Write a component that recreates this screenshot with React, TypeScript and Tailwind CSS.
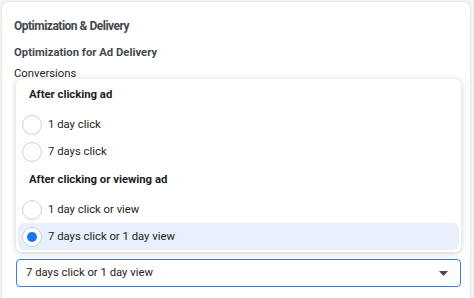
import React from "react";

type Option = { label: string; selected?: boolean };

const groups: { title: string; options: Option[] }[] = [
  {
    title: "After clicking ad",
    options: [{ label: "1 day click" }, { label: "7 days click" }],
  },
  {
    title: "After clicking or viewing ad",
    options: [
      { label: "1 day click or view" },
      { label: "7 days click or 1 day view", selected: true },
    ],
  },
];

function Radio({ checked }: { checked?: boolean }) {
  return (
    <span className="flex h-5 w-5 shrink-0 items-center justify-center rounded-full border border-[#ccd0d5] bg-white">
      {checked && <span className="h-[10px] w-[10px] rounded-full bg-[#1877f2]" />}
    </span>
  );
}

function OptionRow({ option }: { option: Option }) {
  return (
    <div
      className={
        option.selected
          ? "flex h-[27px] items-center gap-[6px] rounded-md bg-[#e9f0fb] px-1 pt-[1px]"
          : "flex h-[27px] items-center gap-[6px] rounded-md px-1 pt-[1px]"
      }
    >
      <Radio checked={option.selected} />
      <span className="text-[11.3px] text-[#1c1e21]">{option.label}</span>
    </div>
  );
}

export default function App() {
  return (
    <div
      className="h-[298px] overflow-hidden bg-[#f4f4f5] pl-[2px] pt-[2px]"
      style={{ fontFamily: "Roboto, 'Liberation Sans', sans-serif" }}
    >
      <div className="h-[310px] w-[468px] rounded-md bg-white pl-[12px] pt-[14px] shadow-[0_0_2px_rgba(0,0,0,0.18)]">
        <h1 className="text-[12px] leading-5 font-bold tracking-[-0.5px] text-[#444950]">
          Optimization &amp; Delivery
        </h1>
        <div className="mt-[9px] text-[11.3px] leading-4 font-bold text-[#444950]">
          Optimization for Ad Delivery
        </div>
        <div className="mt-[5px] text-[11.3px] leading-4 text-[#1c1e21]">Conversions</div>

        <div className="relative z-10 -mt-[3px] ml-[2px] w-[445px] rounded-md bg-white px-[2px] pt-2 pb-[2px] shadow-[0_1px_6px_rgba(0,0,0,0.2)]">
          {groups.map((g, i) => (
            <div key={g.title} className={i > 0 ? "mt-[7px]" : ""}>
              <div className="mb-2 pl-[11px] text-[11.3px] leading-4 font-bold text-[#1c1e21]">
                {g.title}
              </div>
              <div className="flex flex-col">
                {g.options.map((o) => (
                  <OptionRow key={o.label} option={o} />
                ))}
              </div>
            </div>
          ))}
        </div>

        <button className="mt-[7px] ml-[2px] flex h-[28px] w-[445px] items-center justify-between rounded-[4px] border border-[#3f7be6] pr-3 pl-[9px] text-[11.3px] text-[#1c1e21]">
          <span>7 days click or 1 day view</span>
          <svg width="9" height="5" viewBox="0 0 9 5">
            <path d="M0 0h9L4.5 5z" fill="#444950" />
          </svg>
        </button>
      </div>
    </div>
  );
}
